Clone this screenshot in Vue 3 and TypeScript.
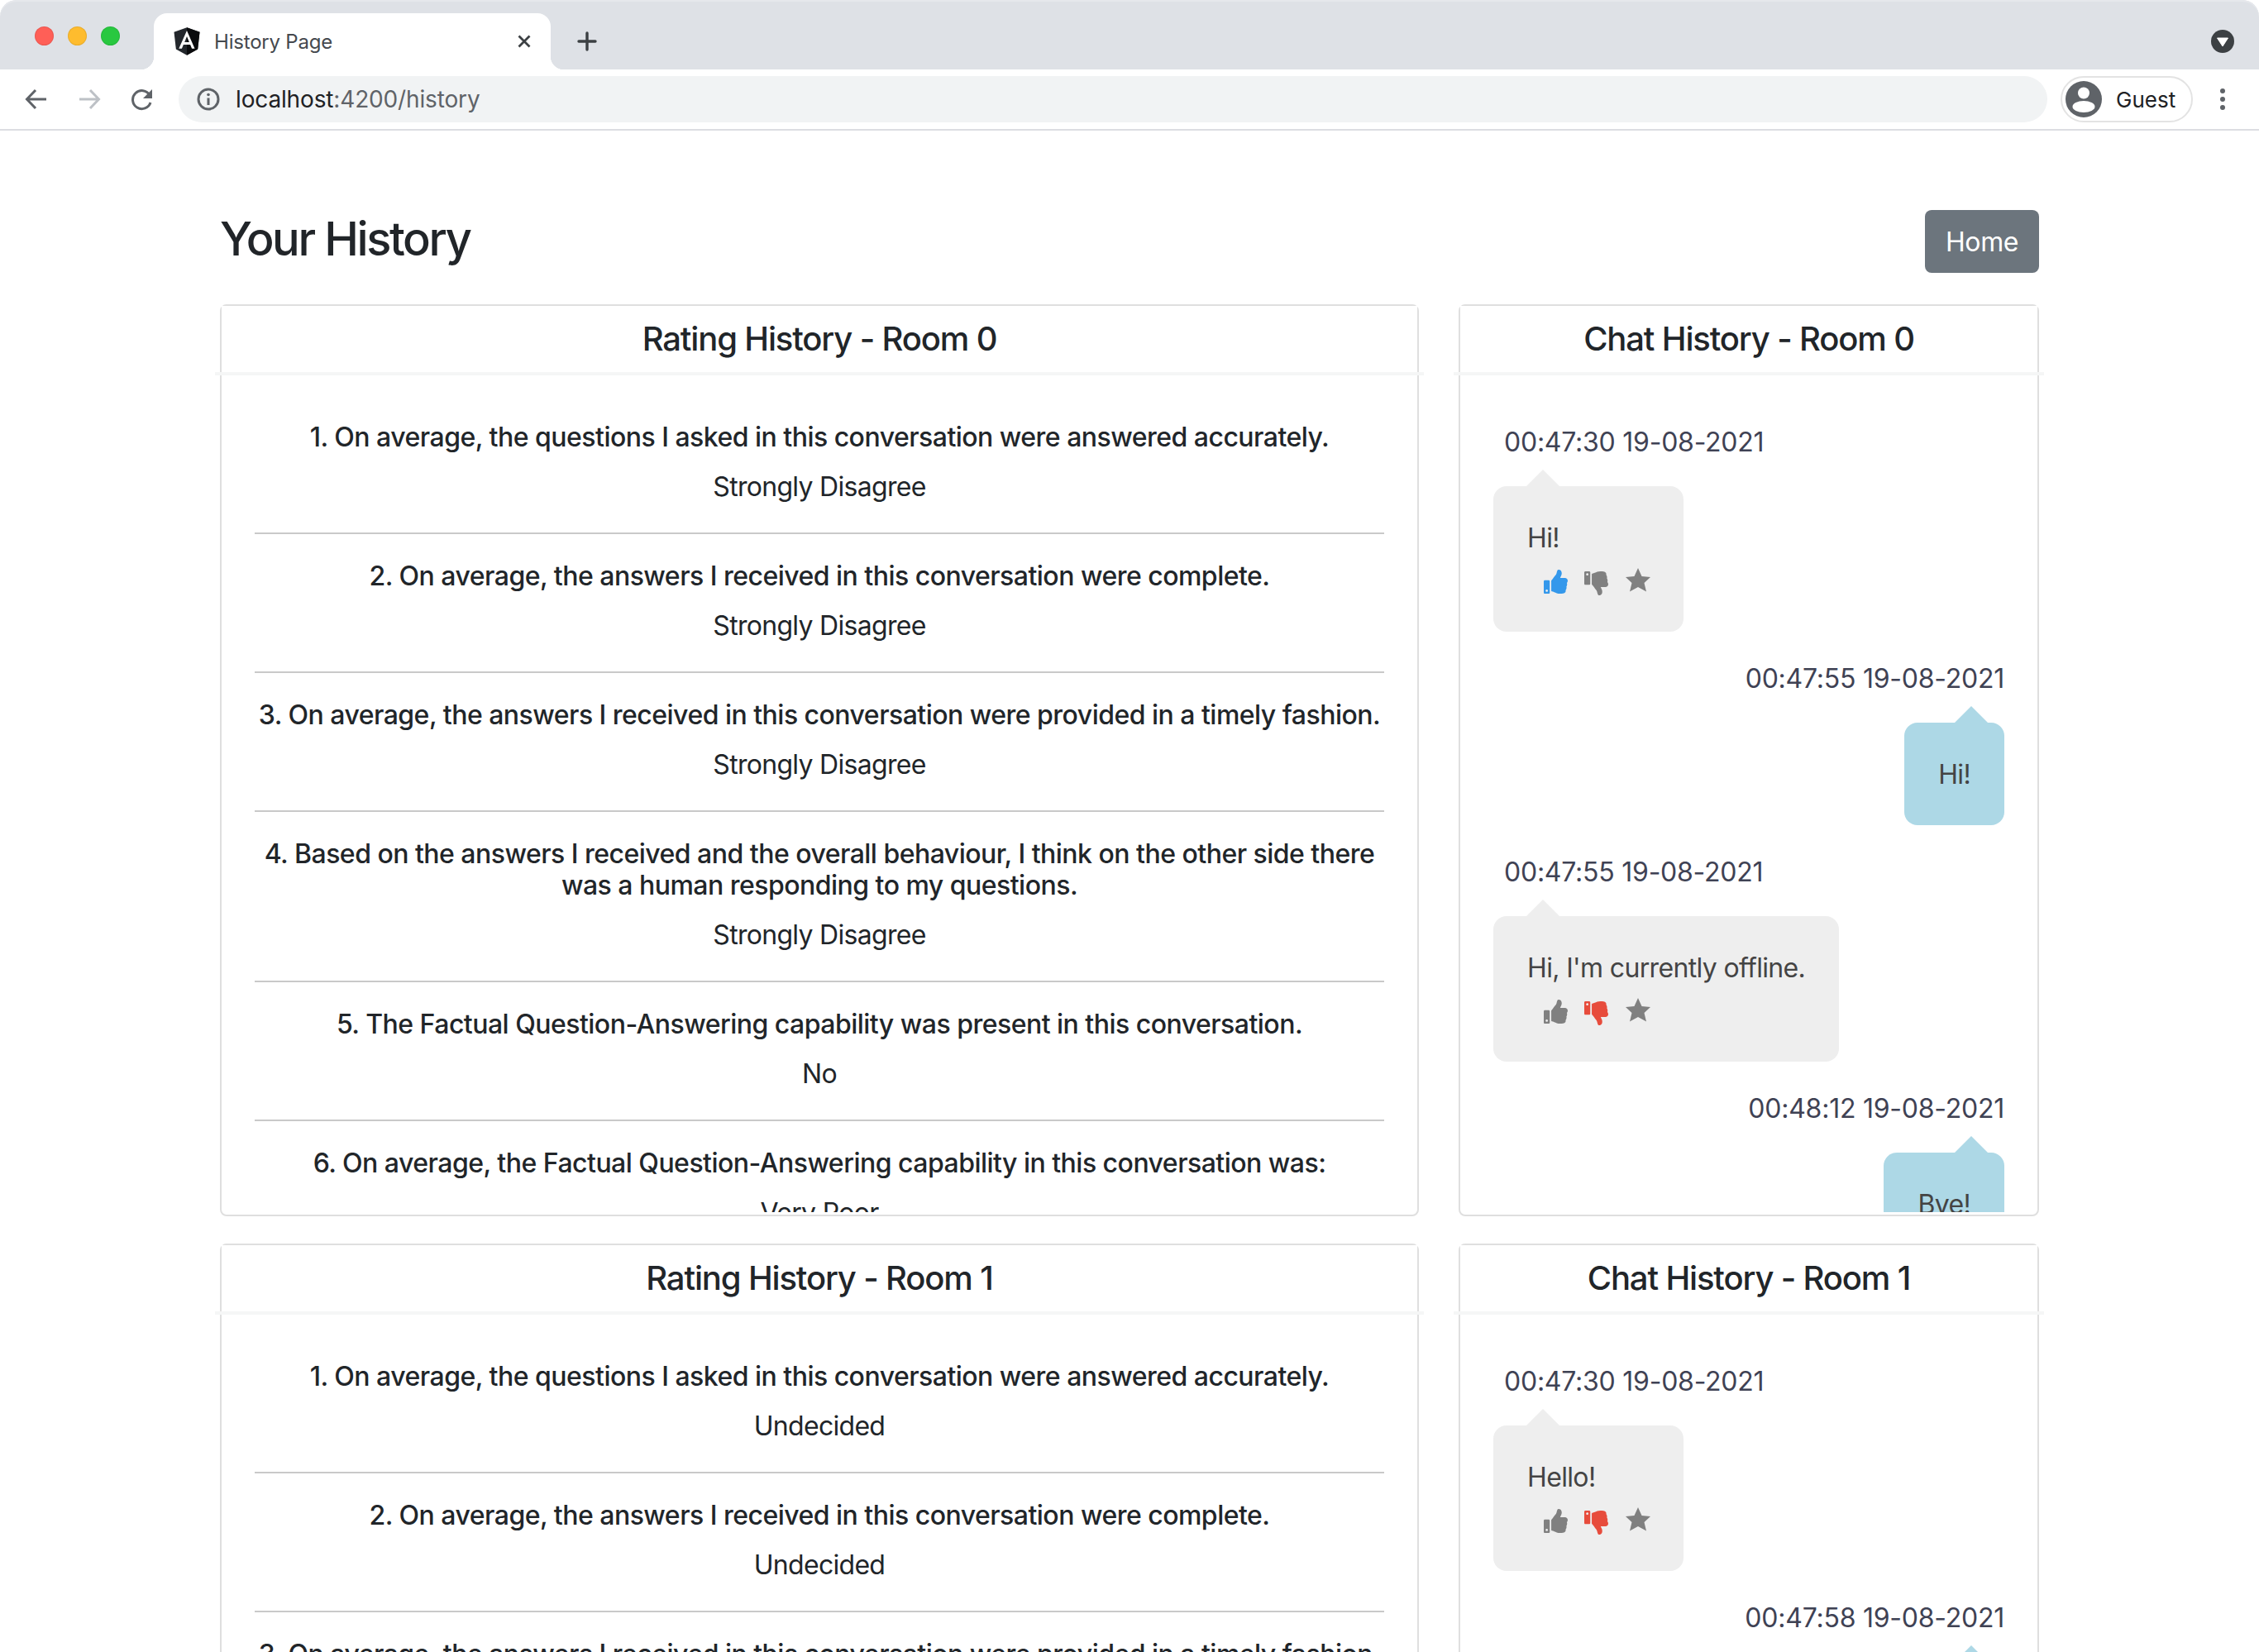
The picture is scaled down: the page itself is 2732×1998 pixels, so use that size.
<script setup lang="ts">
interface Rating { q: string; a: string }
interface Msg { time: string; text: string; mine?: boolean; vote?: 'up' | 'down' | 'none' }
interface Room { id: number; ratings: Rating[]; chat: Msg[] }

const questions = [
  '1. On average, the questions I asked in this conversation were answered accurately.',
  '2. On average, the answers I received in this conversation were complete.',
  '3. On average, the answers I received in this conversation were provided in a timely fashion.',
  '4. Based on the answers I received and the overall behaviour, I think on the other side there was a human responding to my questions.',
  '5. The Factual Question-Answering capability was present in this conversation.',
  '6. On average, the Factual Question-Answering capability in this conversation was:',
]

function toRatings(answers: string[]): Rating[] {
  return questions.map((q, i) => ({ q, a: answers[i] }))
}

const rooms: Room[] = [
  {
    id: 0,
    ratings: toRatings(['Strongly Disagree', 'Strongly Disagree', 'Strongly Disagree', 'Strongly Disagree', 'No', 'Very Poor']),
    chat: [
      { time: '00:47:30 19-08-2021', text: 'Hi!', vote: 'up' },
      { time: '00:47:55 19-08-2021', text: 'Hi!', mine: true },
      { time: '00:47:55 19-08-2021', text: "Hi, I'm currently offline.", vote: 'down' },
      { time: '00:48:12 19-08-2021', text: 'Bye!', mine: true },
    ],
  },
  {
    id: 1,
    ratings: toRatings(['Undecided', 'Undecided', 'Undecided', 'Undecided', 'No', 'Very Poor']),
    chat: [
      { time: '00:47:30 19-08-2021', text: 'Hello!', vote: 'down' },
      { time: '00:47:58 19-08-2021', text: 'Hello!', mine: true },
    ],
  },
]

const thumb = 'M104 224H24c-13.255 0-24 10.745-24 24v240c0 13.255 10.745 24 24 24h80c13.255 0 24-10.745 24-24V248c0-13.255-10.745-24-24-24zM64 472c-13.255 0-24-10.745-24-24s10.745-24 24-24 24 10.745 24 24-10.745 24-24 24zM384 81.452c0 42.416-25.97 66.208-33.277 94.548h101.723c33.397 0 59.397 27.746 59.553 58.098.084 17.938-7.546 37.249-19.439 49.197l-.11.11c9.836 23.337 8.237 56.037-9.308 79.469 8.681 25.895-.069 57.704-16.382 74.757 4.298 17.598 2.244 32.575-6.148 44.632C440.202 511.587 389.616 512 346.839 512l-2.845-.001c-48.287-.017-87.806-17.598-119.56-31.725-15.957-7.099-36.821-15.887-52.651-16.178-6.54-.12-11.783-5.457-11.783-11.998v-213.77c0-3.2 1.282-6.271 3.558-8.521 39.614-39.144 56.648-80.587 89.117-113.111 14.804-14.832 20.188-37.236 25.393-58.902C282.515 39.293 291.817 0 312 0c24 0 72 8 72 81.452z'
</script>

<template>
  <div class="page">
    <div class="tabstrip">
      <div class="lights">
        <span class="light red"></span>
        <span class="light yellow"></span>
        <span class="light green"></span>
      </div>
      <div class="tab">
        <svg class="favicon" viewBox="30 28 190 204">
          <path fill="#23272c" d="M125 30L31.9 63.2l14.2 123.1L125 230l78.9-43.7 14.2-123.1z" />
          <path fill="#0a0b0d" d="M125 30v200l78.9-43.7 14.2-123.1L125 30z" />
          <path fill="#fff" d="M125 52.1L66.8 182.6h21.7l11.7-29.2h49.4l11.7 29.2H182L125 52.1zm17 83.3h-34l17-40.9 17 40.9z" />
        </svg>
        <span class="tab-title">History Page</span>
        <svg class="tab-close" viewBox="0 0 16 16"><path d="M1.5 1.5l13 13M14.5 1.5l-13 13" /></svg>
      </div>
      <svg class="new-tab" viewBox="0 0 24 24"><path d="M12 2v20M2 12h20" /></svg>
      <svg class="tab-menu" viewBox="0 0 28 28">
        <circle cx="14" cy="14" r="14" fill="#3c4043" />
        <path d="M7.5 10h13L14 20z" fill="#fff" stroke="#fff" stroke-width="1" stroke-linejoin="round" />
      </svg>
    </div>

    <div class="toolbar">
      <svg class="nav" viewBox="0 0 28 28"><path d="M26 14H3M13 3L2.500 14 13 25" /></svg>
      <svg class="nav faded" viewBox="0 0 28 28"><path d="M2 14h23M15 3l10.500 11L15 25" /></svg>
      <svg class="nav" viewBox="0 0 28 28">
        <path d="M24 18a11 11 0 1 1-1-9" />
        <path class="filled" d="M26 2v11H15z" />
      </svg>
      <div class="omnibox">
        <svg class="info" viewBox="0 0 28 28">
          <circle cx="14" cy="14" r="12" />
          <path d="M14 12.500V21" />
          <circle class="dot" cx="14" cy="8.500" r="1.800" />
        </svg>
        <span class="url">localhost<span class="url-rest">:4200/history</span></span>
      </div>
      <div class="guest">
        <svg class="avatar" viewBox="0 0 44 44">
          <circle cx="22" cy="22" r="22" fill="#5f6368" />
          <circle cx="22" cy="14.500" r="7" fill="#fff" />
          <ellipse cx="22" cy="31" rx="13.500" ry="7" fill="#fff" />
        </svg>
        <span>Guest</span>
      </div>
      <div class="kebab"><i></i><i></i><i></i></div>
    </div>

    <main class="content">
      <header class="head">
        <h3>Your History</h3>
        <button class="home">Home</button>
      </header>

      <section v-for="room in rooms" :key="room.id" class="room">
        <div class="card">
          <h5 class="card-title">Rating History - Room {{ room.id }}</h5>
          <div class="card-body ratings">
            <div v-for="(r, i) in room.ratings" :key="i">
              <h6>{{ r.q }}</h6>
              <p>{{ r.a }}</p>
              <hr />
            </div>
          </div>
        </div>

        <div class="card">
          <h5 class="card-title">Chat History - Room {{ room.id }}</h5>
          <div class="card-body chat">
            <div v-for="(m, i) in room.chat" :key="i" class="msg" :class="{ mine: m.mine }">
              <div class="time">{{ m.time }}</div>
              <div class="bubble">
                <div class="text">{{ m.text }}</div>
                <div v-if="!m.mine" class="actions">
                  <svg class="act like" :class="{ up: m.vote === 'up' }" viewBox="0 0 512 512"><path :d="thumb" /></svg>
                  <svg class="act dislike" :class="{ down: m.vote === 'down' }" viewBox="0 0 512 512"><path :d="thumb" transform="matrix(1 0 0 -1 0 512)" /></svg>
                  <svg class="act star" viewBox="0 0 30 29"><path d="M15 0l4.500 10L30 11l-7.500 7L25 28.500 15 23 5 28.500 7.500 18 0 11l10.500-1z" /></svg>
                </div>
              </div>
            </div>
          </div>
        </div>
      </section>
    </main>
  </div>
</template>

<style scoped>
.page { width: 2732px; height: 1998px; overflow: hidden; background: #fff; font-family: Inter, "Liberation Sans", sans-serif; color: #212529 }

.tabstrip { height: 84px; background: #dee1e6; display: flex; align-items: flex-end; position: relative; border-radius: 20px 20px 0 0; box-shadow: inset 0 2px 0 #e6e8ec }
.lights { width: 186px; height: 84px; padding: 2px 0 0 42px; box-sizing: border-box; display: flex; align-items: center; gap: 17px }
.light { width: 23px; height: 23px; border-radius: 50%; box-sizing: border-box; border: 1px solid rgba(0, 0, 0, .08) }
.red { background: #ff5f57 }
.yellow { background: #febc2e }
.green { background: #28c840 }
.tab { width: 480px; height: 68px; background: #fff; border-radius: 16px 16px 0 0; display: flex; align-items: center; padding: 0 24px; box-sizing: border-box; position: relative }
.tab::before, .tab::after { content: ''; position: absolute; bottom: 0; width: 16px; height: 16px }
.tab::before { left: -16px; background: radial-gradient(circle at 0 0, transparent 16px, #fff 16.5px) }
.tab::after { right: -16px; background: radial-gradient(circle at 100% 0, transparent 16px, #fff 16.5px) }
.favicon { width: 32px; height: 34px; flex: none }
.tab-title { margin-left: 17px; font-size: 24px; letter-spacing: -.2px; color: #45494e; flex: 1 }
.tab-close { width: 16px; height: 16px }
.tab-close path { stroke: #3c4043; stroke-width: 2.8; fill: none }
.new-tab { width: 24px; height: 24px; margin: 0 0 22px 32px }
.new-tab path { stroke: #3c4043; stroke-width: 3.4; fill: none; stroke-linecap: round }
.tab-menu { width: 28px; height: 28px; position: absolute; right: 30px; top: 36px }

.toolbar { height: 72px; background: #fff; border-bottom: 2px solid #dcdde2; display: flex; align-items: center; padding-left: 30px }
.nav { width: 28px; height: 28px; margin-right: 36px; flex: none }
.nav path { stroke: #5f6368; stroke-width: 3; fill: none }
.nav path.filled { fill: #5f6368; stroke: none }
.nav.faded path { stroke: #bdc1c6 }
.omnibox { width: 2260px; height: 56px; margin-left: -6px; border-radius: 28px; background: #f1f3f4; display: flex; align-items: center; padding-left: 22px; box-sizing: border-box; flex: none }
.info { width: 28px; height: 28px; flex: none }
.info circle { stroke: #5f6368; stroke-width: 3; fill: none }
.info path { stroke: #5f6368; stroke-width: 3 }
.info circle.dot { fill: #5f6368; stroke: none }
.url { margin-left: 19px; font-size: 28px; letter-spacing: -.15px; color: #202124 }
.url-rest { color: #5f6368 }
.guest { width: 160px; height: 56px; margin-left: 16px; border: 2px solid #e3e3e3; border-radius: 28px; box-sizing: border-box; display: flex; align-items: center; padding-left: 4px; font-size: 26px; color: #202124; gap: 17px; flex: none }
.avatar { width: 44px; height: 44px; flex: none }
.kebab { margin-left: 33px; display: flex; flex-direction: column; gap: 4px }
.kebab i { width: 6px; height: 6px; border-radius: 50%; background: #5f6368 }

.content { width: 2200px; margin-left: 266px }
.head { display: flex; justify-content: space-between; align-items: center; padding-top: 96px; margin-bottom: 38px }
h3 { margin: 0; font-size: 56px; line-height: 67px; font-weight: 550; letter-spacing: -2.4px; position: relative; top: -3px }
.home { width: 138px; height: 76px; padding: 0; border: 0; border-radius: 8px; background: #6c757d; color: #fff; font: 400 32px Inter, "Liberation Sans", sans-serif; letter-spacing: -.4px }

.room { display: grid; grid-template-columns: 1450px 702px; gap: 48px; margin-bottom: 33px }
.card { height: 1103px; box-sizing: border-box; border: 2px solid #dfdfdf; border-radius: 8px; background: #fff }
.card-title { margin: 0 -8px; height: 80px; line-height: 80px; border-bottom: 4px solid #f5f6f6; box-sizing: content-box; font-size: 40px; font-weight: 500; letter-spacing: -1.15px; text-align: center; background: linear-gradient(#fff, #fff) 8px 0 / calc(100% - 16px) 100% no-repeat }
.card-body { height: 1012px; overflow: hidden; box-sizing: border-box }

.ratings { padding: 56px 40px 0; text-align: center }
h6 { margin: 0 0 17px; font-size: 32px; line-height: 38px; font-weight: 500; letter-spacing: -.52px }
.ratings p { margin: 0; font-size: 32px; line-height: 48px; letter-spacing: -.7px }
hr { margin: 31px 0 32px; border: 0; border-top: 2px solid #c9c9c9 }

.chat { padding: 57px 40px 0; display: flex; flex-direction: column }
.msg { display: flex; flex-direction: column; align-items: flex-start; margin-bottom: 33px; flex: none }
.msg.mine { align-items: flex-end }
.time { font-size: 32px; line-height: 48px; letter-spacing: -.24px; color: #3f4254; margin: 0 0 29px 13px }
.mine .time { margin-left: 0 }
.bubble { position: relative; padding: 39px 41px 37px; border-radius: 16px; background: #eee; color: #444; font-size: 32px; line-height: 48px; letter-spacing: -.65px; min-width: 148px }
.bubble::before { content: ''; position: absolute; top: -20px; left: 40px; border: 20px solid transparent; border-top: 0; border-bottom-color: #eee }
.mine .bubble { background: #add8e6; min-width: 0 }
.mine .bubble::before { left: auto; right: 20px; border-bottom-color: #add8e6 }
.actions { display: flex; gap: 20px; margin-left: 20px; height: 52px; padding-top: 12px; box-sizing: border-box }
.act { width: 29px; height: 29px; fill: #808080; flex: none }
.like { margin-top: 2px }
.dislike { margin-top: 4px }
.star { width: 30px; margin: 0 -1px 0 1px }
.act.up { fill: #3498eb }
.act.down { fill: #e74c3c }
</style>

<style>
html, body { margin: 0; background: #3c4050; overflow: hidden }
</style>
